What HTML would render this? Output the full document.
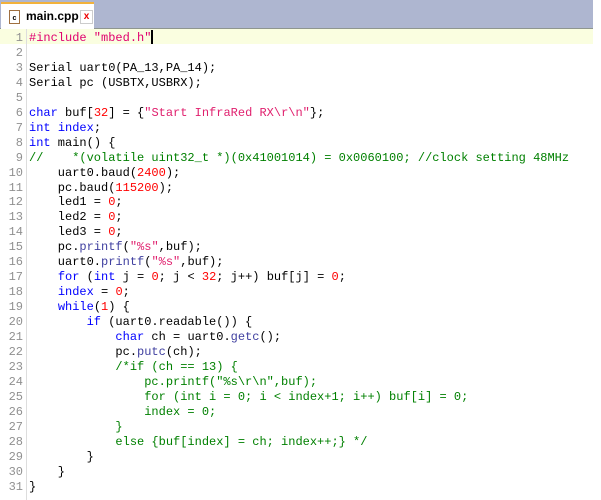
<!DOCTYPE html>
<html><head><meta charset="utf-8"><style>
body{margin:0;width:601px;height:500px;background:#fff;overflow:hidden;position:relative;font-family:"Liberation Mono",monospace}
.bar{position:absolute;left:0;top:0;width:593px;height:28px;background:#aeb6d0;border-bottom:1px solid #8f968f}
.tab{position:absolute;left:1px;top:2px;width:93px;height:27px;background:#fff;border-top:2px solid #f2b23c;box-sizing:border-box}
.tab .ic{position:absolute;left:8px;top:6px;width:9px;height:12px;border:1px solid #a07040;background:#fff;font:bold 7px "Liberation Sans",sans-serif;text-align:center;line-height:15px;color:#000}
.tab .nm{position:absolute;left:25px;top:5px;font:bold 12px "Liberation Sans",sans-serif;color:#000}
.tab .x{position:absolute;left:79px;top:6px;width:11px;height:12px;border:1px solid #ccc;color:#e00;font:bold 10px "Liberation Sans",sans-serif;text-align:center;line-height:12px}
.hl{position:absolute;left:0;top:29px;width:593px;height:15px;background:#fafee0}
.gut{position:absolute;left:26px;top:29px;width:1px;height:471px;background:#ddd}
.code{position:absolute;left:0;top:30px;font-size:12px;line-height:14.95px;white-space:pre;color:#000}
.ln{display:inline-block;width:23px;text-align:right;color:#909090;margin-right:6px}
.k{color:#0000ff}.s{color:#e0206e}.n{color:#ff0000}.c{color:#008000}.f{color:#4040a0}.p{color:#e0006e}
.cur{display:inline-block;width:2px;height:14px;background:#000;vertical-align:-3px}
</style></head><body>
<div class="bar"><div class="tab"><div class="ic">c</div><div class="nm">main.cpp</div><div class="x">x</div></div></div>
<div class="hl"></div>
<div class="gut"></div>
<div class="code"><span class="ln">1</span><span class="p">#include "mbed.h"</span><span class="cur"></span>
<span class="ln">2</span>
<span class="ln">3</span>Serial uart0(PA_13,PA_14);
<span class="ln">4</span>Serial pc (USBTX,USBRX);
<span class="ln">5</span>
<span class="ln">6</span><span class="k">char</span> buf[<span class="n">32</span>] = {<span class="s">"Start InfraRed RX\r\n"</span>};
<span class="ln">7</span><span class="k">int</span> <span class="k">index</span>;
<span class="ln">8</span><span class="k">int</span> main() {
<span class="ln">9</span><span class="c">//    *(volatile uint32_t *)(0x41001014) = 0x0060100; //clock setting 48MHz</span>
<span class="ln">10</span>    uart0.baud(<span class="n">2400</span>);
<span class="ln">11</span>    pc.baud(<span class="n">115200</span>);
<span class="ln">12</span>    led1 = <span class="n">0</span>;
<span class="ln">13</span>    led2 = <span class="n">0</span>;
<span class="ln">14</span>    led3 = <span class="n">0</span>;
<span class="ln">15</span>    pc.<span class="f">printf</span>(<span class="s">"%s"</span>,buf);
<span class="ln">16</span>    uart0.<span class="f">printf</span>(<span class="s">"%s"</span>,buf);
<span class="ln">17</span>    <span class="k">for</span> (<span class="k">int</span> j = <span class="n">0</span>; j &lt; <span class="n">32</span>; j++) buf[j] = <span class="n">0</span>;
<span class="ln">18</span>    <span class="k">index</span> = <span class="n">0</span>;
<span class="ln">19</span>    <span class="k">while</span>(<span class="n">1</span>) {
<span class="ln">20</span>        <span class="k">if</span> (uart0.readable()) {
<span class="ln">21</span>            <span class="k">char</span> ch = uart0.<span class="f">getc</span>();
<span class="ln">22</span>            pc.<span class="f">putc</span>(ch);
<span class="ln">23</span>            <span class="c">/*if (ch == 13) {</span>
<span class="ln">24</span><span class="c">                pc.printf("%s\r\n",buf);</span>
<span class="ln">25</span><span class="c">                for (int i = 0; i &lt; index+1; i++) buf[i] = 0;</span>
<span class="ln">26</span><span class="c">                index = 0;</span>
<span class="ln">27</span><span class="c">            }</span>
<span class="ln">28</span><span class="c">            else {buf[index] = ch; index++;} */</span>
<span class="ln">29</span>        }
<span class="ln">30</span>    }
<span class="ln">31</span>}</div>
</body></html>
